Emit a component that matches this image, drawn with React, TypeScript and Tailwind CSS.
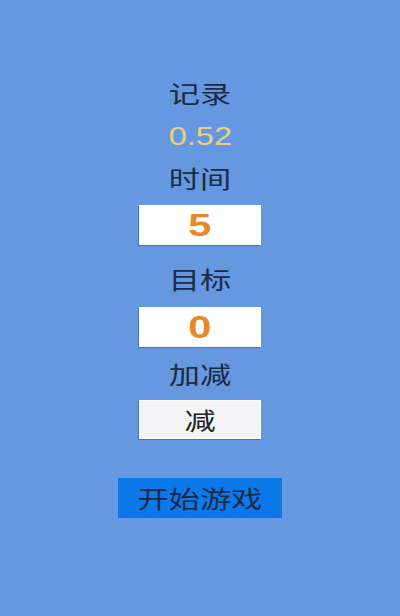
import { useState } from "react"

// 라벨 글자가 가로로 늘어난 모양이라 scale-x 로 맞춤
const cjk = { fontFamily: '"Noto Sans CJK SC", "Noto Sans", sans-serif' }
const latin = { fontFamily: '"Liberation Sans", Arial, sans-serif' }

function Label({ text, top }: { text: string; top: string }) {
    return (
        <div className={`${top} h-[34px] flex items-center justify-center`}>
            <span style={cjk} className="inline-block scale-x-[1.3] text-[24px] leading-none text-[#1d2b45]">
                {text}
            </span>
        </div>
    )
}

function ValueBox({ value, top }: { value: string; top: string }) {
    return (
        <div className={`${top} w-[122px] h-[40px] bg-white flex items-center justify-center shadow-[-1px_1px_0_rgba(40,70,130,0.45)]`}>
            <span style={latin} className="inline-block scale-x-[1.3] text-[32px] font-bold leading-none text-[#e6892a]">
                {value}
            </span>
        </div>
    )
}

export default function App() {
    const [mode, setMode] = useState("减")

    return (
        <div className="w-[400px] h-[616px] bg-[#6598e0] flex flex-col items-center">
            <Label text="记录" top="mt-[76px]" />
            <div className="mt-[9px] h-[34px] flex items-center justify-center">
                <span style={latin} className="inline-block scale-x-[1.3] text-[25px] leading-none text-[#e8d27c]">
                    0.52
                </span>
            </div>
            <Label text="时间" top="mt-[8px]" />
            <ValueBox value="5" top="mt-[10px]" />
            <Label text="目标" top="mt-[17px]" />
            <ValueBox value="0" top="mt-[11px]" />
            <Label text="加减" top="mt-[10px]" />
            <button
                onClick={() => setMode(mode == "减" ? "加" : "减")}
                className="mt-[9px] w-[122px] h-[39px] bg-[#f4f4f6] border border-white flex items-center justify-center shadow-[-1px_1px_0_rgba(40,70,130,0.45)]"
            >
                <span style={cjk} className="inline-block scale-x-[1.3] text-[24px] leading-none text-[#222]">
                    {mode}
                </span>
            </button>
            <button className="mt-[39px] w-[164px] h-[40px] bg-[#0b79e9] flex items-center justify-center">
                <span style={cjk} className="inline-block scale-x-[1.3] text-[24px] leading-none text-[#1b2a48]">
                    开始游戏
                </span>
            </button>
        </div>
    )
}
